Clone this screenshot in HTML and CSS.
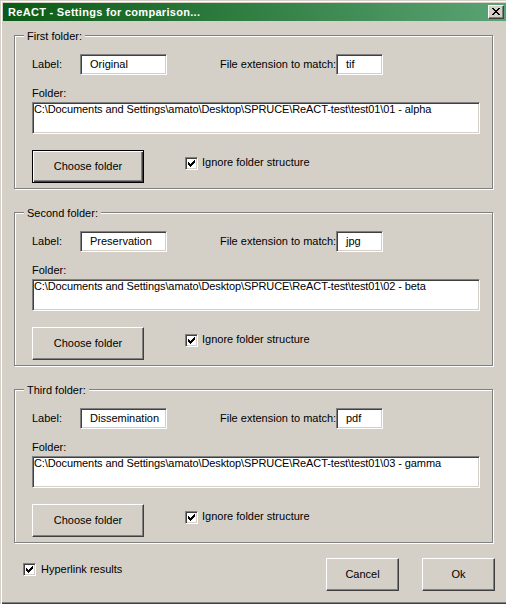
FILE: index.html
```html
<!DOCTYPE html>
<html>
<head>
<meta charset="utf-8">
<link rel="stylesheet" href="styles.css">
</head>
<body>
<div class="window">
  <div class="titlebar">
    <span class="title">ReACT - Settings for comparison...</span>
    <span class="close"><svg width="14" height="12" viewBox="0 0 14 12" shape-rendering="crispEdges"><path fill="#000" d="M3 2h2v1h-2zM9 2h2v1h-2zM4 3h2v1h-2zM8 3h2v1h-2zM5 4h4v1h-4zM6 5h2v1h-2zM5 6h4v1h-4zM4 7h2v1h-2zM8 7h2v1h-2zM3 8h2v1h-2zM9 8h2v1h-2z"/></svg></span>
  </div>
  <div class="content">
    <div class="group">
      <span class="legend">First folder:</span>
      <div class="row">
        <span class="lbl">Label:</span><span class="field short">Original</span>
        <span class="extlbl">File extension to match:</span><span class="field ext">tif</span>
      </div>
      <div class="folderlbl">Folder:</div>
      <div class="field path">C:\Documents and Settings\amato\Desktop\SPRUCE\ReACT-test\test01\01 - alpha</div>
      <div class="actions">
        <span class="btn default">Choose folder</span>
        <span class="check"><span class="chk"><svg width="11" height="11" viewBox="0 0 11 11" shape-rendering="crispEdges"><path fill="#000" d="M2 4h1v3h-1zM3 5h1v3h-1zM4 6h1v3h-1zM5 5h1v3h-1zM6 4h1v3h-1zM7 3h1v3h-1zM8 2h1v3h-1z"/></svg></span><span class="chktext">Ignore folder structure</span></span>
      </div>
    </div>
    <div class="group">
      <span class="legend">Second folder:</span>
      <div class="row">
        <span class="lbl">Label:</span><span class="field short">Preservation</span>
        <span class="extlbl">File extension to match:</span><span class="field ext">jpg</span>
      </div>
      <div class="folderlbl">Folder:</div>
      <div class="field path">C:\Documents and Settings\amato\Desktop\SPRUCE\ReACT-test\test01\02 - beta</div>
      <div class="actions">
        <span class="btn">Choose folder</span>
        <span class="check"><span class="chk"><svg width="11" height="11" viewBox="0 0 11 11" shape-rendering="crispEdges"><path fill="#000" d="M2 4h1v3h-1zM3 5h1v3h-1zM4 6h1v3h-1zM5 5h1v3h-1zM6 4h1v3h-1zM7 3h1v3h-1zM8 2h1v3h-1z"/></svg></span><span class="chktext">Ignore folder structure</span></span>
      </div>
    </div>
    <div class="group">
      <span class="legend">Third folder:</span>
      <div class="row">
        <span class="lbl">Label:</span><span class="field short">Dissemination</span>
        <span class="extlbl">File extension to match:</span><span class="field ext">pdf</span>
      </div>
      <div class="folderlbl">Folder:</div>
      <div class="field path">C:\Documents and Settings\amato\Desktop\SPRUCE\ReACT-test\test01\03 - gamma</div>
      <div class="actions">
        <span class="btn">Choose folder</span>
        <span class="check"><span class="chk"><svg width="11" height="11" viewBox="0 0 11 11" shape-rendering="crispEdges"><path fill="#000" d="M2 4h1v3h-1zM3 5h1v3h-1zM4 6h1v3h-1zM5 5h1v3h-1zM6 4h1v3h-1zM7 3h1v3h-1zM8 2h1v3h-1z"/></svg></span><span class="chktext">Ignore folder structure</span></span>
      </div>
    </div>
    <div class="footer">
      <span class="check hyper"><span class="chk"><svg width="11" height="11" viewBox="0 0 11 11" shape-rendering="crispEdges"><path fill="#000" d="M2 4h1v3h-1zM3 5h1v3h-1zM4 6h1v3h-1zM5 5h1v3h-1zM6 4h1v3h-1zM7 3h1v3h-1zM8 2h1v3h-1z"/></svg></span><span class="hypertext">Hyperlink results</span></span>
      <span class="btn small cancel">Cancel</span>
      <span class="btn small ok">Ok</span>
    </div>
  </div>
</div>
</body>
</html>
```

FILE: styles.css
```css
* { box-sizing: border-box; }
html, body { margin: 0; padding: 0; overflow: hidden; }
body {
  width: 506px;
  height: 604px;
  background: #d4d0c8;
  font-family: "Liberation Sans", Arial, sans-serif;
  font-size: 11px;
  line-height: 13px;
  color: #000;
}
.window {
  width: 509px;
  height: 604px;
  padding: 3px;
  background: #d4d0c8;
  box-shadow: inset 1px 1px 0 #d4d0c8, inset 2px 2px 0 #fff, inset -1px -1px 0 #404040, inset -2px -2px 0 #808080;
}
.titlebar {
  height: 18px;
  display: flex;
  align-items: center;
  justify-content: space-between;
  padding: 0 2px 0 5px;
  background: linear-gradient(to right, #0a5a14, #5aa474);
  color: #fff;
  font-weight: bold;
}
.title { white-space: nowrap; letter-spacing: 0.3px; }
.close {
  width: 16px;
  height: 14px;
  background: #d4d0c8;
  border: 1px solid;
  border-color: #fff #404040 #404040 #fff;
  box-shadow: inset -1px -1px 0 #808080;
}
.close svg { display: block; }
.content { padding: 14px 0 0 11px; }
.group {
  position: relative;
  width: 479px;
  border: 1px solid #808080;
  box-shadow: 1px 1px 0 #fff, inset 1px 1px 0 #fff;
  padding: 18px 0 5px 17px;
}
.group + .group { margin-top: 23px; }
.legend {
  position: absolute;
  top: -6px;
  left: 9px;
  padding: 0 3px;
  background: #d4d0c8;
  white-space: nowrap;
}
.row { display: flex; align-items: center; height: 21px; }
.lbl { width: 48px; }
.field {
  background: #fff;
  border: 1px solid;
  border-color: #808080 #fff #fff #808080;
  box-shadow: inset 1px 1px 0 #404040, inset -1px -1px 0 #d4d0c8;
  white-space: nowrap;
  overflow: hidden;
}
.short { width: 87px; height: 21px; padding-left: 9px; line-height: 19px; }
.extlbl { margin-left: 53px; width: 116px; white-space: nowrap; }
.ext { width: 47px; height: 21px; padding-left: 9px; line-height: 19px; }
.folderlbl { margin-top: 12px; }
.path { margin-top: 2px; width: 448px; height: 32px; padding: 0 1px; letter-spacing: -0.1px; }
.actions { margin-top: 16px; display: flex; align-items: flex-start; }
.btn {
  display: flex;
  align-items: center;
  justify-content: center;
  width: 112px;
  height: 33px;
  background: #d4d0c8;
  border: 1px solid;
  border-color: #fff #404040 #404040 #fff;
  box-shadow: inset -1px -1px 0 #808080;
}
.btn.default {
  border-color: #000;
  box-shadow: inset 1px 1px 0 #fff, inset -1px -1px 0 #404040, inset -2px -2px 0 #808080;
}
.check { display: flex; align-items: flex-start; margin-left: 41px; margin-top: 7px; }
.chk {
  width: 13px;
  height: 13px;
  background: #fff;
  border: 1px solid;
  border-color: #808080 #fff #fff #808080;
  box-shadow: inset 1px 1px 0 #404040, inset -1px -1px 0 #d4d0c8;
}
.chk svg { display: block; }
.chktext { margin-left: 4px; margin-top: -1px; white-space: nowrap; }
.footer { display: flex; align-items: flex-start; width: 481px; margin-top: 15px; }
.check.hyper { margin-left: 9px; margin-top: 5px; }
.hypertext { margin-left: 5px; white-space: nowrap; }
.btn.small { width: 73px; }
.cancel { margin-left: auto; }
.ok { margin-left: 23px; }
```
